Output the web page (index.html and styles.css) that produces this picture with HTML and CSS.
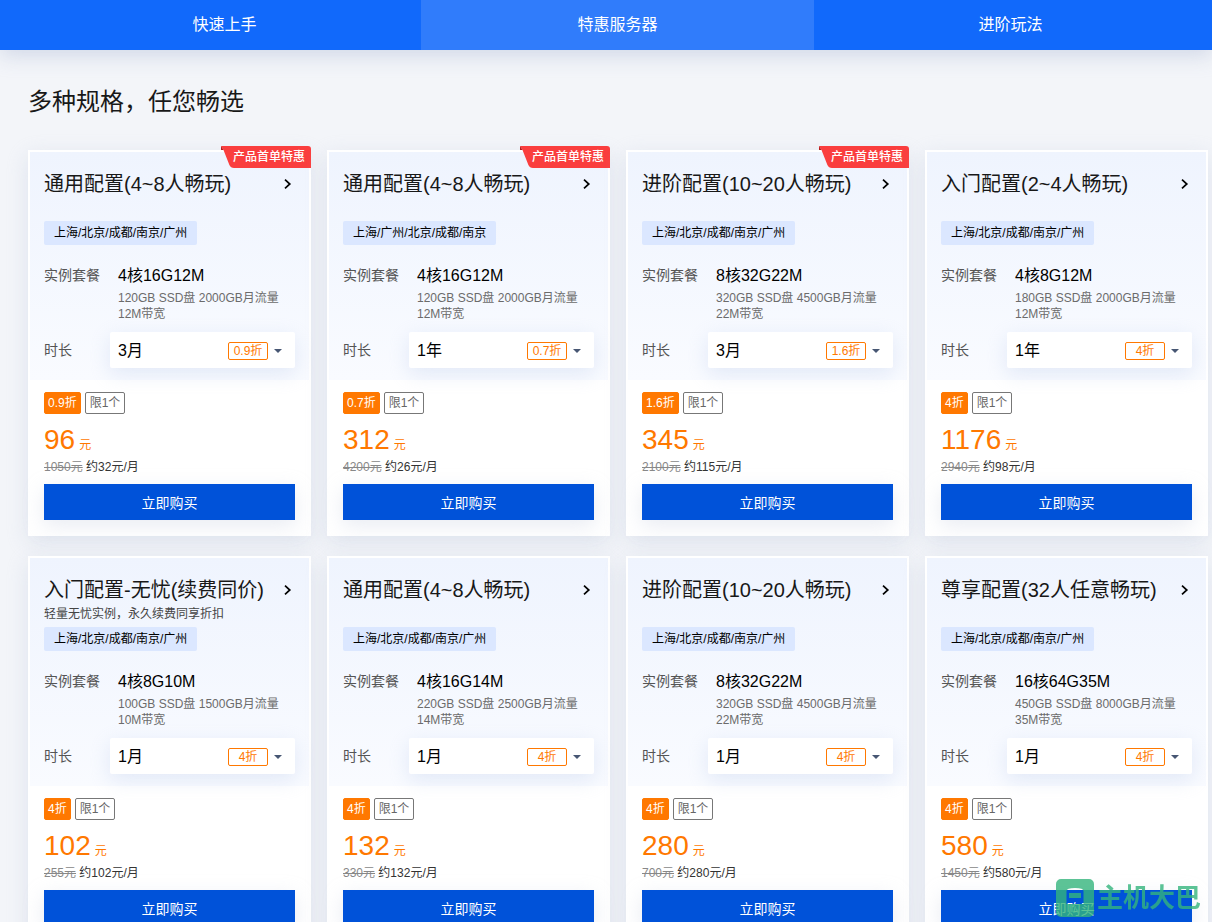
FILE: index.html
```
<!DOCTYPE html>
<html lang="zh-CN">
<head>
<meta charset="utf-8">
<meta name="viewport" content="width=device-width, initial-scale=1">
<title>特惠服务器</title>
<link rel="stylesheet" href="styles.css">
</head>
<body>
<svg class="sprite" aria-hidden="true">
  <symbol id="chevron" viewBox="0 0 8 12"><path d="M1 1.700 5.800 6 1 10.300" fill="none" stroke="currentColor" stroke-width="1.700"/></symbol>
  <symbol id="caret" viewBox="0 0 8 4"><path d="M0 0h8L4 4z" fill="currentColor"/></symbol>
  <symbol id="flag" viewBox="0 0 90 22"><path d="M0 0h87a3 3 0 0 1 3 3v19H13a5 5 0 0 1-4.600-3L2.500 4z" fill="#fa3e3e"/><path d="M0 0v4h2.500z" fill="#b81c1c"/></symbol>
</svg>
<nav class="tabs">
  <div class="tabs-inner">
    <a class="tab" href="#start">快速上手</a>
    <a class="tab tab-active" href="#servers" aria-current="page">特惠服务器</a>
    <a class="tab" href="#advanced">进阶玩法</a>
  </div>
</nav>
<main class="page" id="servers">
  <h1 class="page-title">多种规格，任您畅选</h1>
  <div class="cards">
    <article class="card">
      <span class="flag"><svg class="flag-shape"><use href="#flag"/></svg><span class="flag-text">产品首单特惠</span></span>
      <div class="card-top">
        <a class="card-link" href="#p1"><h2 class="card-title">通用配置(4~8人畅玩)</h2><svg class="chevron"><use href="#chevron"/></svg></a>
        <p class="card-note"></p>
        <span class="region">上海/北京/成都/南京/广州</span>
        <div class="row spec"><span class="label">实例套餐</span><div class="spec-body"><p class="spec-name">4核16G12M</p><p class="spec-detail">120GB SSD盘 2000GB月流量 12M带宽</p></div></div>
        <div class="row"><label class="label" for="d1">时长</label><div class="picker"><select class="duration" id="d1"><option>3月</option></select><span class="off">0.9折</span><svg class="caret"><use href="#caret"/></svg></div></div>
      </div>
      <div class="card-bottom">
        <div class="tags"><span class="tag tag-off">0.9折</span><span class="tag">限1个</span></div>
        <p class="price">96<small class="unit">元</small></p>
        <p class="average"><del class="old">1050元</del> 约32元/月</p>
        <button class="buy" type="button">立即购买</button>
      </div>
    </article>
    <article class="card">
      <span class="flag"><svg class="flag-shape"><use href="#flag"/></svg><span class="flag-text">产品首单特惠</span></span>
      <div class="card-top">
        <a class="card-link" href="#p2"><h2 class="card-title">通用配置(4~8人畅玩)</h2><svg class="chevron"><use href="#chevron"/></svg></a>
        <p class="card-note"></p>
        <span class="region">上海/广州/北京/成都/南京</span>
        <div class="row spec"><span class="label">实例套餐</span><div class="spec-body"><p class="spec-name">4核16G12M</p><p class="spec-detail">120GB SSD盘 2000GB月流量 12M带宽</p></div></div>
        <div class="row"><label class="label" for="d2">时长</label><div class="picker"><select class="duration" id="d2"><option>1年</option></select><span class="off">0.7折</span><svg class="caret"><use href="#caret"/></svg></div></div>
      </div>
      <div class="card-bottom">
        <div class="tags"><span class="tag tag-off">0.7折</span><span class="tag">限1个</span></div>
        <p class="price">312<small class="unit">元</small></p>
        <p class="average"><del class="old">4200元</del> 约26元/月</p>
        <button class="buy" type="button">立即购买</button>
      </div>
    </article>
    <article class="card">
      <span class="flag"><svg class="flag-shape"><use href="#flag"/></svg><span class="flag-text">产品首单特惠</span></span>
      <div class="card-top">
        <a class="card-link" href="#p3"><h2 class="card-title">进阶配置(10~20人畅玩)</h2><svg class="chevron"><use href="#chevron"/></svg></a>
        <p class="card-note"></p>
        <span class="region">上海/北京/成都/南京/广州</span>
        <div class="row spec"><span class="label">实例套餐</span><div class="spec-body"><p class="spec-name">8核32G22M</p><p class="spec-detail">320GB SSD盘 4500GB月流量 22M带宽</p></div></div>
        <div class="row"><label class="label" for="d3">时长</label><div class="picker"><select class="duration" id="d3"><option>3月</option></select><span class="off">1.6折</span><svg class="caret"><use href="#caret"/></svg></div></div>
      </div>
      <div class="card-bottom">
        <div class="tags"><span class="tag tag-off">1.6折</span><span class="tag">限1个</span></div>
        <p class="price">345<small class="unit">元</small></p>
        <p class="average"><del class="old">2100元</del> 约115元/月</p>
        <button class="buy" type="button">立即购买</button>
      </div>
    </article>
    <article class="card">
      <div class="card-top">
        <a class="card-link" href="#p4"><h2 class="card-title">入门配置(2~4人畅玩)</h2><svg class="chevron"><use href="#chevron"/></svg></a>
        <p class="card-note"></p>
        <span class="region">上海/北京/成都/南京/广州</span>
        <div class="row spec"><span class="label">实例套餐</span><div class="spec-body"><p class="spec-name">4核8G12M</p><p class="spec-detail">180GB SSD盘 2000GB月流量 12M带宽</p></div></div>
        <div class="row"><label class="label" for="d4">时长</label><div class="picker"><select class="duration" id="d4"><option>1年</option></select><span class="off">4折</span><svg class="caret"><use href="#caret"/></svg></div></div>
      </div>
      <div class="card-bottom">
        <div class="tags"><span class="tag tag-off">4折</span><span class="tag">限1个</span></div>
        <p class="price">1176<small class="unit">元</small></p>
        <p class="average"><del class="old">2940元</del> 约98元/月</p>
        <button class="buy" type="button">立即购买</button>
      </div>
    </article>
    <article class="card">
      <div class="card-top">
        <a class="card-link" href="#p5"><h2 class="card-title">入门配置-无忧(续费同价)</h2><svg class="chevron"><use href="#chevron"/></svg></a>
        <p class="card-note">轻量无忧实例，永久续费同享折扣</p>
        <span class="region">上海/北京/成都/南京/广州</span>
        <div class="row spec"><span class="label">实例套餐</span><div class="spec-body"><p class="spec-name">4核8G10M</p><p class="spec-detail">100GB SSD盘 1500GB月流量 10M带宽</p></div></div>
        <div class="row"><label class="label" for="d5">时长</label><div class="picker"><select class="duration" id="d5"><option>1月</option></select><span class="off">4折</span><svg class="caret"><use href="#caret"/></svg></div></div>
      </div>
      <div class="card-bottom">
        <div class="tags"><span class="tag tag-off">4折</span><span class="tag">限1个</span></div>
        <p class="price">102<small class="unit">元</small></p>
        <p class="average"><del class="old">255元</del> 约102元/月</p>
        <button class="buy" type="button">立即购买</button>
      </div>
    </article>
    <article class="card">
      <div class="card-top">
        <a class="card-link" href="#p6"><h2 class="card-title">通用配置(4~8人畅玩)</h2><svg class="chevron"><use href="#chevron"/></svg></a>
        <p class="card-note"></p>
        <span class="region">上海/北京/成都/南京/广州</span>
        <div class="row spec"><span class="label">实例套餐</span><div class="spec-body"><p class="spec-name">4核16G14M</p><p class="spec-detail">220GB SSD盘 2500GB月流量 14M带宽</p></div></div>
        <div class="row"><label class="label" for="d6">时长</label><div class="picker"><select class="duration" id="d6"><option>1月</option></select><span class="off">4折</span><svg class="caret"><use href="#caret"/></svg></div></div>
      </div>
      <div class="card-bottom">
        <div class="tags"><span class="tag tag-off">4折</span><span class="tag">限1个</span></div>
        <p class="price">132<small class="unit">元</small></p>
        <p class="average"><del class="old">330元</del> 约132元/月</p>
        <button class="buy" type="button">立即购买</button>
      </div>
    </article>
    <article class="card">
      <div class="card-top">
        <a class="card-link" href="#p7"><h2 class="card-title">进阶配置(10~20人畅玩)</h2><svg class="chevron"><use href="#chevron"/></svg></a>
        <p class="card-note"></p>
        <span class="region">上海/北京/成都/南京/广州</span>
        <div class="row spec"><span class="label">实例套餐</span><div class="spec-body"><p class="spec-name">8核32G22M</p><p class="spec-detail">320GB SSD盘 4500GB月流量 22M带宽</p></div></div>
        <div class="row"><label class="label" for="d7">时长</label><div class="picker"><select class="duration" id="d7"><option>1月</option></select><span class="off">4折</span><svg class="caret"><use href="#caret"/></svg></div></div>
      </div>
      <div class="card-bottom">
        <div class="tags"><span class="tag tag-off">4折</span><span class="tag">限1个</span></div>
        <p class="price">280<small class="unit">元</small></p>
        <p class="average"><del class="old">700元</del> 约280元/月</p>
        <button class="buy" type="button">立即购买</button>
      </div>
    </article>
    <article class="card">
      <div class="card-top">
        <a class="card-link" href="#p8"><h2 class="card-title">尊享配置(32人任意畅玩)</h2><svg class="chevron"><use href="#chevron"/></svg></a>
        <p class="card-note"></p>
        <span class="region">上海/北京/成都/南京/广州</span>
        <div class="row spec"><span class="label">实例套餐</span><div class="spec-body"><p class="spec-name">16核64G35M</p><p class="spec-detail">450GB SSD盘 8000GB月流量 35M带宽</p></div></div>
        <div class="row"><label class="label" for="d8">时长</label><div class="picker"><select class="duration" id="d8"><option>1月</option></select><span class="off">4折</span><svg class="caret"><use href="#caret"/></svg></div></div>
      </div>
      <div class="card-bottom">
        <div class="tags"><span class="tag tag-off">4折</span><span class="tag">限1个</span></div>
        <p class="price">580<small class="unit">元</small></p>
        <p class="average"><del class="old">1450元</del> 约580元/月</p>
        <button class="buy" type="button">立即购买</button>
      </div>
    </article>
  </div>
</main>
<div class="watermark">
  <svg class="watermark-logo" viewBox="0 0 38 38" aria-hidden="true"><path fill="currentColor" fill-rule="evenodd" d="M5 0h28a5 5 0 0 1 5 5v28a5 5 0 0 1-5 5H5a5 5 0 0 1-5-5V5a5 5 0 0 1 5-5zM10.500 12q0-3 8.500-3t8.500 3v13h-17zM13 14v5h12v-5z"/></svg>
  <span>主机大巴</span>
</div>
</body>
</html>
```
FILE: styles.css
```
* { box-sizing: border-box; }

body {
  margin: 0;
  background: #f3f5f9;
  color: #181818;
  font-family: "Liberation Sans", "Noto Sans CJK SC", sans-serif;
  font-size: 12px;
}

h1, h2, p { margin: 0; font-weight: 400; }
a { color: inherit; text-decoration: none; }
.sprite { display: none; }

.tabs {
  position: sticky;
  top: 0;
  z-index: 2;
  background: #1169fb;
  box-shadow: 0 6px 20px #c4cde0b0;
}
.tabs-inner {
  display: grid;
  grid-template-columns: repeat(3, 1fr);
  padding: 0 5px 0 28px;
}
.tab {
  color: #fff;
  font-size: 16px;
  line-height: 50px;
  text-align: center;
}
.tab-active { background: #307cfb; }

.page { padding: 32px 4px 20px 28px; }
.page-title {
  margin-bottom: 28px;
  font-size: 24px;
  line-height: 40px;
}

.cards {
  display: grid;
  grid-template-columns: repeat(4, minmax(0, 1fr));
  gap: 20px 16px;
}
.card {
  position: relative;
  border: 2px solid #fff;
  background: #fff;
  box-shadow: 0 6px 20px #c4cde070;
}
.card-top {
  padding: 16px 14px 12px;
  background: linear-gradient(#eff4fe, #f9fbff);
}
.card-bottom { padding: 12px 14px 14px; }

.flag {
  position: absolute;
  top: -6px;
  right: -2px;
  width: 90px;
  height: 22px;
}
.flag-shape { display: block; width: 100%; height: 100%; }
.flag-text {
  position: absolute;
  top: 0;
  right: 6px;
  color: #fff;
  font-weight: 500;
  line-height: 22px;
}

.card-link {
  display: flex;
  align-items: center;
  justify-content: space-between;
  padding-right: 3px;
}
.card-title {
  font-size: 20px;
  line-height: 32px;
  white-space: nowrap;
}
.chevron { width: 8px; height: 12px; color: #000; }
.card-note {
  height: 21px;
  color: #444;
  line-height: 16px;
}
.region {
  display: block;
  width: fit-content;
  padding: 0 10px;
  border-radius: 2px;
  background: #dbe7ff;
  color: #000;
  line-height: 24px;
}

.row { display: flex; align-items: center; }
.spec { align-items: flex-start; margin: 18px 0 10px; }
.label {
  flex: 0 0 66px;
  color: #555;
  font-size: 14px;
  line-height: 24px;
}
.spec-body { flex: 1; min-width: 0; padding-left: 8px; }
.spec-name {
  margin-bottom: 1px;
  color: #000;
  font-size: 16px;
  line-height: 26px;
}
.spec-detail { color: #6b6b6b; line-height: 16px; }

.picker { position: relative; flex: 1; }
.duration {
  display: block;
  width: 100%;
  height: 36px;
  padding: 0 70px 0 8px;
  border: 0;
  border-radius: 2px;
  background: #fff;
  box-shadow: 0 6px 20px #c4d2ec70;
  color: #000;
  font: inherit;
  font-size: 16px;
  appearance: none;
}
.off {
  position: absolute;
  top: 10px;
  right: 27px;
  width: 40px;
  border: 1px solid #ff7800;
  border-radius: 2px;
  color: #ff7800;
  line-height: 16px;
  text-align: center;
  pointer-events: none;
}
.caret {
  position: absolute;
  top: 17px;
  right: 13px;
  width: 8px;
  height: 4px;
  color: #475673;
  pointer-events: none;
}

.tags { display: flex; gap: 4px; margin-bottom: 8px; }
.tag {
  padding: 0 4px;
  border: 1px solid #777;
  border-radius: 2px;
  color: #666;
  line-height: 20px;
}
.tag-off {
  padding: 0 3px;
  border-color: #ff7800;
  background: #ff7800;
  color: #fff;
}
.price {
  display: flex;
  align-items: baseline;
  gap: 4px;
  color: #ff7800;
  font-size: 28px;
  line-height: 36px;
}
.unit { font-size: 12px; line-height: 16px; }
.average { color: #333; line-height: 18px; }
.old { color: #888; }
.buy {
  display: block;
  width: 100%;
  height: 36px;
  margin-top: 8px;
  border: 0;
  background: #0052d9;
  box-shadow: 0 6px 20px #c4cde060;
  color: #fff;
  font: inherit;
  font-size: 14px;
}

.watermark {
  position: fixed;
  right: 11px;
  bottom: 5px;
  z-index: 3;
  display: flex;
  align-items: center;
  gap: 3px;
  color: #34b57c;
  font-size: 26px;
  font-weight: 700;
  line-height: 38px;
  opacity: 0.8;
  pointer-events: none;
}
.watermark-logo { width: 38px; height: 38px; }
```
